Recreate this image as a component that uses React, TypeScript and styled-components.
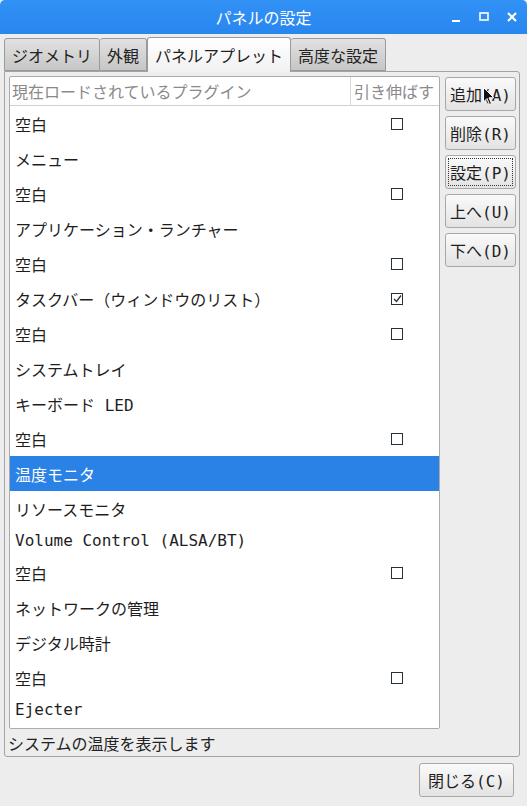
import React from "react";
import styled, { createGlobalStyle } from "styled-components";

const GlobalStyle = createGlobalStyle`
  html, body {
    margin: 0;
    padding: 0;
    background: #ededed;
  }
`;

const uiFont = `"DejaVu Sans", "Noto Sans CJK JP", sans-serif`;
const listFont = `"DejaVu Sans Mono", "Noto Sans CJK JP", monospace`;

const Window = styled.div`
  width: 527px;
  height: 806px;
  display: flex;
  flex-direction: column;
  background: #ededed;
  font-family: ${uiFont};
  color: #1e1e1e;
  overflow: hidden;
  position: relative;
`;

const TitleBar = styled.div`
  height: 34px;
  flex: none;
  display: flex;
  align-items: center;
  justify-content: center;
  position: relative;
  border-radius: 5px 5px 0 0;
  background: linear-gradient(#3291f5, #2886ef);
  color: #fff;
  font-family: "Noto Sans CJK JP", sans-serif;
  font-size: 16px;
`;

const Controls = styled.div`
  position: absolute;
  right: 10px;
  top: 12px;
  display: flex;
  gap: 18px;
  align-items: center;
`;

const Body = styled.div`
  flex: 1;
  display: flex;
  flex-direction: column;
  padding: 2px 7px 0 4px;
`;

const TabStrip = styled.div`
  display: flex;
  align-items: flex-end;
  height: 35px;
`;

const Tab = styled.div<{ $active?: boolean }>`
  height: ${(p) => (p.$active ? 35 : 33)}px;
  box-sizing: border-box;
  padding: 0 7px;
  display: flex;
  align-items: center;
  font-family: "Noto Sans CJK JP", sans-serif;
  font-size: 16px;
  color: #222;
  border: 1px solid #9a9a9a;
  border-bottom: ${(p) => (p.$active ? "none" : "1px solid #9a9a9a")};
  border-left-width: ${(p) => (p.$active ? 1 : 0)}px;
  border-radius: 3px 3px 0 0;
  background: ${(p) =>
    p.$active
      ? "linear-gradient(#ffffff, #f1f1f1)"
      : "linear-gradient(#e2e2e2, #c6c6c6)"};
  margin-bottom: ${(p) => (p.$active ? -1 : 0)}px;
  position: relative;
  &:first-child {
    border-left-width: 1px;
  }
`;

const Panel = styled.div`
  height: 686px;
  box-sizing: border-box;
  border: 1px solid #a3a3a3;
  border-radius: 0 3px 3px 3px;
  padding: 4px 2px 0 4px;
  display: flex;
  flex-direction: column;
`;

const ContentRow = styled.div`
  display: flex;
  gap: 5px;
`;

const List = styled.div`
  width: 431px;
  height: 653px;
  box-sizing: border-box;
  background: #fff;
  border: 1px solid #ababab;
  border-radius: 2px;
  overflow: hidden;
  font-family: ${listFont};
  font-size: 16px;
`;

const HeaderRow = styled.div`
  display: flex;
  height: 28px;
  border-bottom: 1px solid #d0d0d0;
  color: #8a8a8a;
  font-family: "Noto Sans CJK JP", sans-serif;
`;

const HeaderCell = styled.div<{ $width: number; $sep?: boolean }>`
  width: ${(p) => p.$width}px;
  box-sizing: border-box;
  padding-left: ${(p) => (p.$sep ? 3 : 2)}px;
  display: flex;
  align-items: center;
  border-left: ${(p) => (p.$sep ? "1px solid #d8d8d8" : "none")};
`;

const Row = styled.div<{ $selected?: boolean; $short?: boolean }>`
  display: flex;
  align-items: center;
  height: ${(p) => (p.$short ? 29 : 35)}px;
  background: ${(p) => (p.$selected ? "#2a82e6" : "transparent")};
  color: ${(p) => (p.$selected ? "#fff" : "#1e1e1e")};
`;

const NameCell = styled.div`
  width: 340px;
  padding-left: 5px;
  white-space: nowrap;
`;

const StretchCell = styled.div`
  flex: 1;
  display: flex;
  justify-content: center;
`;

const Check = styled.div`
  width: 12px;
  height: 12px;
  box-sizing: border-box;
  border: 1.5px solid #27313a;
  background: #fff;
  display: flex;
  align-items: center;
  justify-content: center;
`;

const ButtonColumn = styled.div`
  display: flex;
  flex-direction: column;
  gap: 5px;
  padding-top: 1px;
`;

const Button = styled.button<{ $focus?: boolean; $w?: number }>`
  width: ${(p) => p.$w ?? 71}px;
  height: 34px;
  box-sizing: border-box;
  border: 1px solid #a8a8a8;
  border-radius: 3px;
  background: linear-gradient(#fafafa, #e3e3e3);
  font-family: ${listFont};
  font-size: 16px;
  color: #1e1e1e;
  padding: 0;
  display: flex;
  align-items: center;
  justify-content: center;
  outline: ${(p) => (p.$focus ? "1px dotted #333" : "none")};
  outline-offset: -4px;
`;

const Status = styled.div`
  font-family: "Noto Sans CJK JP", sans-serif;
  font-size: 16px;
  color: #222;
  padding: 2px 0 0 0;
  margin-left: -1px;
`;

const Footer = styled.div`
  display: flex;
  justify-content: flex-end;
  padding: 6px 6px 0 0;
`;

const Cursor = styled.svg`
  position: absolute;
  left: 483px;
  top: 87px;
`;

type Plugin = { name: string; stretch?: boolean; selected?: boolean };

const plugins: Plugin[] = [
  { name: "空白", stretch: false },
  { name: "メニュー" },
  { name: "空白", stretch: false },
  { name: "アプリケーション・ランチャー" },
  { name: "空白", stretch: false },
  { name: "タスクバー（ウィンドウのリスト）", stretch: true },
  { name: "空白", stretch: false },
  { name: "システムトレイ" },
  { name: "キーボード LED" },
  { name: "空白", stretch: false },
  { name: "温度モニタ", selected: true },
  { name: "リソースモニタ" },
  { name: "Volume Control (ALSA/BT)" },
  { name: "空白", stretch: false },
  { name: "ネットワークの管理" },
  { name: "デジタル時計" },
  { name: "空白", stretch: false },
  { name: "Ejecter" },
];

const hasCJK = (s: string) => /[\u3000-\u9fff\uff00-\uffef]/.test(s);

const App = () => {
  return (
    <Window>
      <GlobalStyle />
      <TitleBar>
        パネルの設定
        <Controls>
          <svg width="10" height="10" viewBox="0 0 10 10">
            <rect x="1" y="8" width="8" height="2" fill="#fff" />
          </svg>
          <svg width="10" height="10" viewBox="0 0 10 10">
            <rect x="1" y="1" width="8" height="7" fill="none" stroke="#fff" strokeWidth="1.6" />
          </svg>
          <svg width="10" height="10" viewBox="0 0 10 10">
            <path d="M1 1 L9 9 M9 1 L1 9" stroke="#fff" strokeWidth="2.2" />
          </svg>
        </Controls>
      </TitleBar>
      <Body>
        <TabStrip>
          <Tab>ジオメトリ</Tab>
          <Tab>外観</Tab>
          <Tab $active>パネルアプレット</Tab>
          <Tab>高度な設定</Tab>
        </TabStrip>
        <Panel>
          <ContentRow>
            <List>
              <HeaderRow>
                <HeaderCell $width={340}>現在ロードされているプラグイン</HeaderCell>
                <HeaderCell $width={89} $sep>
                  引き伸ばす
                </HeaderCell>
              </HeaderRow>
              {plugins.map((p, i) => (
                <Row key={i} $selected={p.selected} $short={!hasCJK(p.name)}>
                  <NameCell>{p.name}</NameCell>
                  <StretchCell>
                    {p.stretch !== undefined && (
                      <Check>
                        {p.stretch && (
                          <svg width="9" height="9" viewBox="0 0 9 9">
                            <path d="M1 5 L3.5 7.5 L8 1.5" fill="none" stroke="#27313a" strokeWidth="1.3" />
                          </svg>
                        )}
                      </Check>
                    )}
                  </StretchCell>
                </Row>
              ))}
            </List>
            <ButtonColumn>
              <Button>追加(A)</Button>
              <Button>削除(R)</Button>
              <Button $focus>設定(P)</Button>
              <Button>上へ(U)</Button>
              <Button>下へ(D)</Button>
            </ButtonColumn>
          </ContentRow>
          <Status>システムの温度を表示します</Status>
        </Panel>
        <Footer>
          <Button $w={95}>閉じる(C)</Button>
        </Footer>
      </Body>
      <Cursor width="12" height="19" viewBox="0 0 12 19">
        <path d="M0.5 0.5 L0.5 15 L4 11.5 L6.5 17.5 L8.5 16.5 L6 10.8 L10.8 10.8 Z" fill="#111" stroke="#fff" strokeWidth="1" />
      </Cursor>
    </Window>
  );
};

export default App;
